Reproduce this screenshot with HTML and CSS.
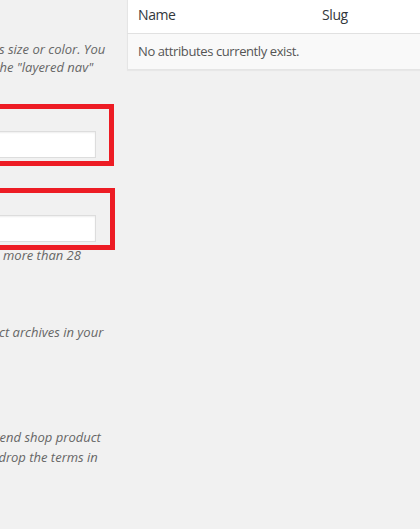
FILE: index.html
```html
<!DOCTYPE html>
<html lang="en">
<head>
<meta charset="utf-8">
<title>Attributes</title>
<link rel="stylesheet" href="styles.css">
</head>
<body>
<div class="wrap">
  <div class="col-left">
    <div class="form-wrap">
      <p class="intro">Attributes let you define extra product data, such as size or color. You<br>can use these attributes in the shop sidebar using the "layered nav"<br>widgets.</p>
      <div class="mark">
        <label class="field-label" for="attr-name">Name</label>
        <input id="attr-name" class="text-input" type="text">
      </div>
      <p class="desc desc-name">Name for the attribute (shown on the front-end).</p>
      <div class="mark mark-slug">
        <label class="field-label" for="attr-slug">Slug</label>
        <input id="attr-slug" class="text-input" type="text">
      </div>
      <p class="desc">Unique slug/reference for the attribute; must be no more than 28<br>characters.</p>
      <div class="field field-archive">
        <label class="field-label"><input type="checkbox" class="check"> Enable archives?</label>
        <p class="desc">Enable this if you want this attribute to have product archives in your<br>store.</p>
      </div>
      <div class="field field-order">
        <label class="field-label" for="attr-order">Default sort order</label>
        <select id="attr-order" class="select"><option>Custom ordering</option></select>
        <p class="desc">Determines the sort order of the terms on the frontend shop product<br>pages. If using custom ordering, you can drag and drop the terms in<br>this attribute.</p>
      </div>
      <button class="button" type="button">Add attribute</button>
    </div>
  </div>
  <div class="col-right">
    <table class="attr-table">
      <thead>
        <tr><th class="col-name">Name</th><th class="col-slug">Slug</th></tr>
      </thead>
      <tbody>
        <tr><td colspan="2">No attributes currently exist.</td></tr>
      </tbody>
    </table>
  </div>
</div>
</body>
</html>
```
FILE: styles.css
```css
html, body {
  margin: 0;
  padding: 0;
  background: #f1f1f1;
  overflow: hidden;
}
body {
  font-family: "Open Sans", "Noto Sans", sans-serif;
  font-size: 13px;
  color: #32373c;
  width: 420px;
  height: 529px;
}
.wrap {
  display: flex;
  align-items: flex-start;
}
.col-left {
  flex: none;
  width: 406px;
  margin-left: -292px;
}
.col-right {
  flex: none;
  width: 420px;
  margin-left: 13px;
}
.form-wrap p {
  white-space: nowrap;
  font-style: italic;
  color: #666;
  margin: 0;
}
.intro {
  padding-top: 40px;
  line-height: 18.2px;
  margin-bottom: 9px !important;
}
.desc {
  line-height: 19.5px;
}
.mark {
  border: 5px solid #ed1c24;
  padding: 2px 13px 3px 0;
}
.mark-slug {
  margin-right: -1px;
  padding-right: 14px;
}
.field-label {
  display: block;
  line-height: 20px;
  color: #23282d;
}
.text-input {
  display: block;
  box-sizing: border-box;
  width: 100%;
  height: 27px;
  margin: 0;
  border: 1px solid #ddd;
  box-shadow: inset 0 1px 2px rgba(0,0,0,.07);
  background: #fff;
}
.form-wrap .desc-name,
.form-wrap .mark + .desc {
  margin-top: -4px;
}
.form-wrap .desc-name {
  margin-bottom: 7px;
}
.field-archive {
  padding-top: 18px;
}
.field-order {
  padding-top: 13px;
}
.check {
  margin: 0 4px 0 0;
  vertical-align: middle;
}
.select {
  display: block;
  height: 28px;
  margin-bottom: 5px;
}
.button {
  margin-top: 10px;
}
.attr-table {
  width: 420px;
  margin-top: -4px;
  border-collapse: collapse;
  border: 1px solid #e5e5e5;
  box-shadow: 0 1px 1px rgba(0,0,0,.04);
  background: #fff;
  letter-spacing: -0.4px;
}
.attr-table th {
  text-align: left;
  font-weight: 400;
  font-size: 14px;
  line-height: 19.6px;
  padding: 8px 10px;
  border-bottom: 1px solid #e1e1e1;
  color: #32373c;
}
.attr-table .col-name {
  width: 164px;
}
.attr-table td {
  background: #f9f9f9;
  line-height: 19.5px;
  padding: 8px 10px;
  color: #555;
}
```
